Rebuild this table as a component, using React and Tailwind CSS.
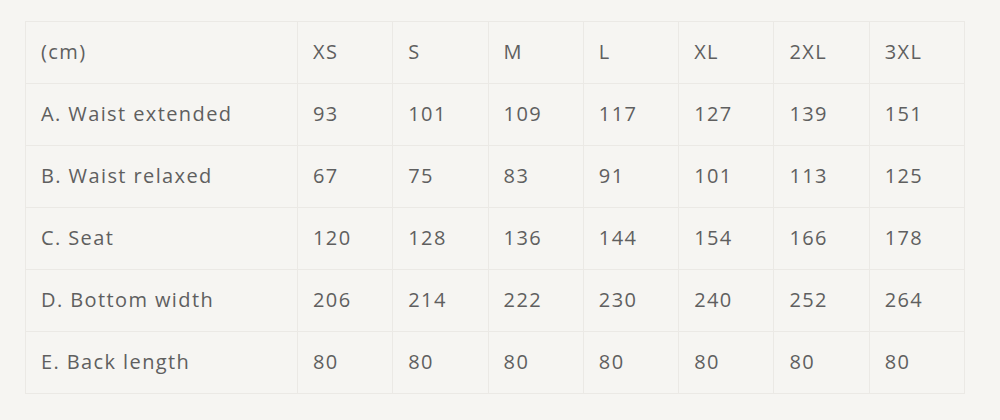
import React from "react";

const sizes = ["XS", "S", "M", "L", "XL", "2XL", "3XL"];
const rows = [
  ["A. Waist extended", 93, 101, 109, 117, 127, 139, 151],
  ["B. Waist relaxed", 67, 75, 83, 91, 101, 113, 125],
  ["C. Seat", 120, 128, 136, 144, 154, 166, 178],
  ["D. Bottom width", 206, 214, 222, 230, 240, 252, 264],
  ["E. Back length", 80, 80, 80, 80, 80, 80, 80],
];

export default function App() {
  return (
    <div
      className="w-[1000px] h-[420px] bg-[#f6f5f2] pl-[25px] pt-[21px] text-[#5f5f5f]"
      style={{ fontFamily: '"Open Sans", "Liberation Sans", sans-serif' }}
    >
      <table className="border-collapse table-fixed w-[940px] text-[20px] leading-[28px] tracking-[1.4px]">
        <colgroup>
          <col className="w-[272px]" />
          {sizes.map((s) => (
            <col key={s} />
          ))}
        </colgroup>
        <tbody>
          <tr className="h-[62px]">
            <td className="border border-[#ebe9e5] pl-[15px] pb-[2px] align-middle">(cm)</td>
            {sizes.map((s) => (
              <td key={s} className="border border-[#ebe9e5] pl-[15px] pb-[2px] align-middle">
                {s}
              </td>
            ))}
          </tr>
          {rows.map((r) => (
            <tr key={r[0]} className="h-[62px]">
              {r.map((c, i) => (
                <td key={i} className="border border-[#ebe9e5] pl-[15px] pb-[2px] align-middle">
                  {c}
                </td>
              ))}
            </tr>
          ))}
        </tbody>
      </table>
    </div>
  );
}
